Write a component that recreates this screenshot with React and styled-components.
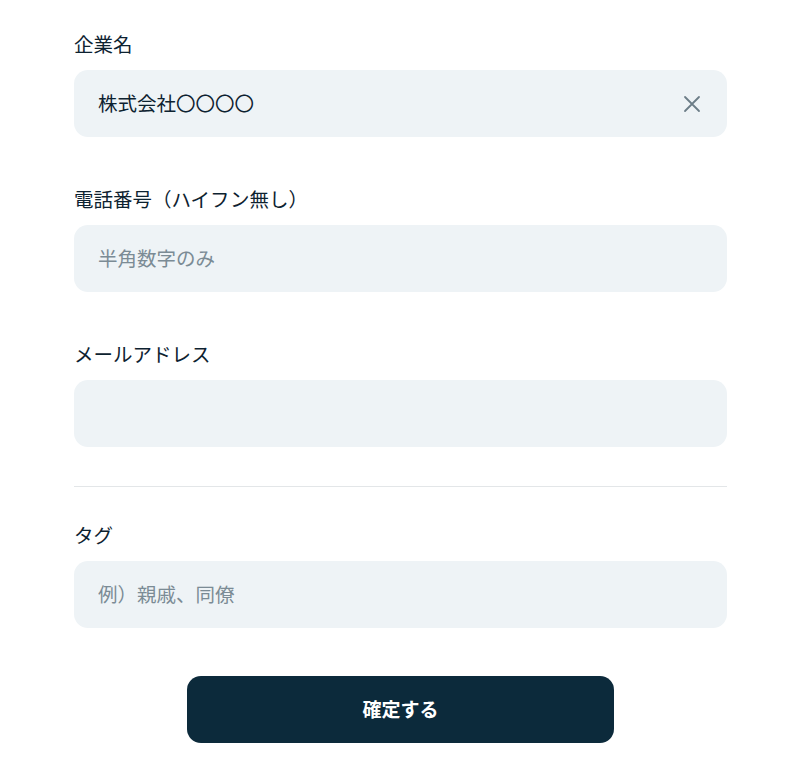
import React, { useState } from 'react';
import styled, { createGlobalStyle } from 'styled-components';

const GlobalStyle = createGlobalStyle`
  body {
    margin: 0;
    background: #fff;
    font-family: "Noto Sans CJK JP", "Noto Sans", sans-serif;
    color: #0d2230;
  }
`;

const Form = styled.form`
  width: 653px;
  margin: 0 auto 0 74px;
  padding-top: 31px;
  display: flex;
  flex-direction: column;
`;

const Field = styled.div`
  display: flex;
  flex-direction: column;
  gap: 13px;
  margin-bottom: ${(p) => p.gapAfter || 49}px;
`;

const Label = styled.label`
  font-size: 19.5px;
  line-height: 26px;
  color: #0d2230;
`;

const InputWrap = styled.div`
  position: relative;
  height: 67px;
  border-radius: 14px;
  background: #eef3f6;
`;

const Input = styled.input`
  box-sizing: border-box;
  width: 100%;
  height: 100%;
  border: none;
  outline: none;
  background: transparent;
  padding: 0 60px 3px 24px;
  font-family: inherit;
  font-size: 19.5px;
  color: #0d2230;

  &::placeholder {
    color: #7b8b95;
  }
`;

const ClearButton = styled.button`
  position: absolute;
  right: 24px;
  top: 50%;
  transform: translateY(-50%);
  width: 22px;
  height: 22px;
  padding: 0;
  border: none;
  background: none;
  display: flex;
  align-items: center;
  justify-content: center;
  cursor: pointer;
`;

const Divider = styled.hr`
  border: none;
  border-top: 1px solid #e3e6e8;
  margin: 0 0 35px;
`;

const Submit = styled.button`
  align-self: center;
  width: 427px;
  height: 67px;
  padding: 0 0 3px;
  border: none;
  border-radius: 14px;
  background: #0c2a3b;
  color: #fff;
  font-family: inherit;
  font-size: 19px;
  font-weight: 700;
  cursor: pointer;
`;

const CloseIcon = () => (
  <svg width="18" height="18" viewBox="0 0 18 18" fill="none" stroke="#6c7d87" strokeWidth="1.8" strokeLinecap="round">
    <path d="M2 2L16 16M16 2L2 16" />
  </svg>
);

const App = () => {
  const [company, setCompany] = useState('株式会社〇〇〇〇');

  return (
    <>
      <GlobalStyle />
      <Form onSubmit={(e) => e.preventDefault()}>
        <Field>
          <Label>企業名</Label>
          <InputWrap>
            <Input value={company} onChange={(e) => setCompany(e.target.value)} />
            <ClearButton type="button" onClick={() => setCompany('')}>
              <CloseIcon />
            </ClearButton>
          </InputWrap>
        </Field>
        <Field>
          <Label>電話番号（ハイフン無し）</Label>
          <InputWrap>
            <Input placeholder="半角数字のみ" />
          </InputWrap>
        </Field>
        <Field gapAfter={39}>
          <Label>メールアドレス</Label>
          <InputWrap>
            <Input />
          </InputWrap>
        </Field>
        <Divider />
        <Field gapAfter={48}>
          <Label>タグ</Label>
          <InputWrap>
            <Input placeholder="例）親戚、同僚" />
          </InputWrap>
        </Field>
        <Submit type="submit">確定する</Submit>
      </Form>
    </>
  );
};

export default App;
